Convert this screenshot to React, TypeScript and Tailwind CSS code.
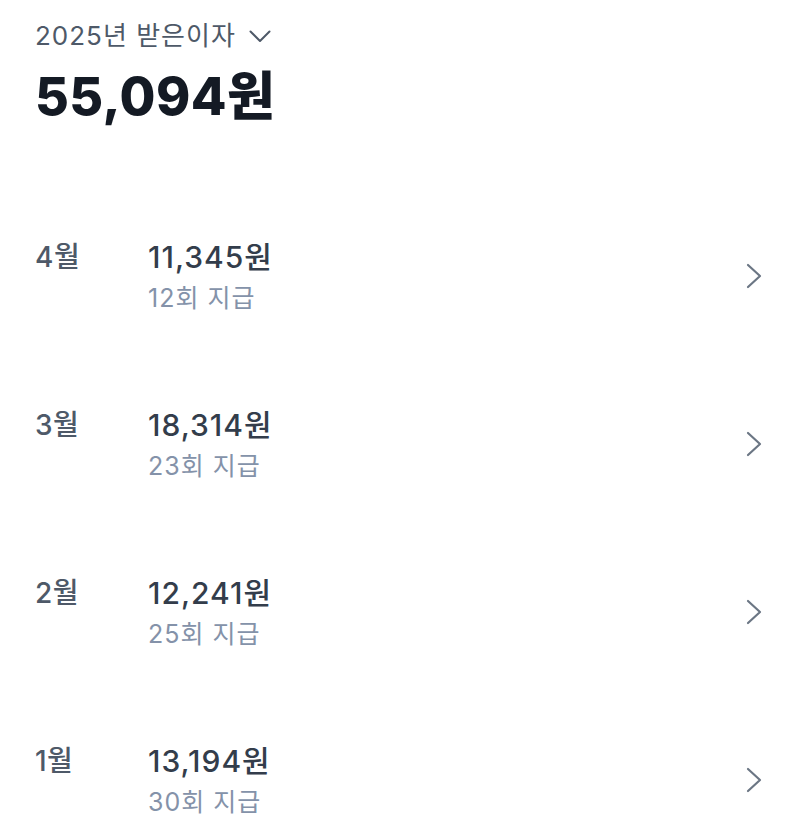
import React from "react";

type Row = { month: string; amount: string; count: string };

const rows: Row[] = [
  { month: "4월", amount: "11,345원", count: "12회 지급" },
  { month: "3월", amount: "18,314원", count: "23회 지급" },
  { month: "2월", amount: "12,241원", count: "25회 지급" },
  { month: "1월", amount: "13,194원", count: "30회 지급" },
];

const font = {
  fontFamily: '"Inter", "Noto Sans CJK KR", "Noto Sans", sans-serif',
};

function ChevronDown() {
  return (
    <svg width="22" height="13" viewBox="0 0 22 13" fill="none">
      <path d="M1.5 1.5 L11 11 L20.5 1.5" stroke="#4e5968" strokeWidth="2" strokeLinecap="round" strokeLinejoin="round" />
    </svg>
  );
}

function ChevronRight() {
  return (
    <svg width="16" height="26" viewBox="0 0 16 26" fill="none">
      <path d="M2 2 L14 13 L2 24" stroke="#6b7684" strokeWidth="2.2" strokeLinecap="round" strokeLinejoin="round" />
    </svg>
  );
}

export default function App() {
  return (
    <div className="min-h-screen w-full bg-white" style={font}>
      <div className="pl-[35px] pr-[34px] pt-[19px]">
        <div className="flex items-center gap-[13px]">
          <span className="text-[26px] leading-[34px] text-[#4e5968] tracking-[1px]">2025년 받은이자</span>
          <ChevronDown />
        </div>
        <div className="mt-[12px] text-[52px] leading-[64px] font-extrabold text-[#141a24] tracking-[0.4px]">55,094원</div>
        <div className="mt-[63px] flex flex-col">
          {rows.map((r) => (
            <div key={r.month} className="flex h-[168px] items-center justify-between">
              <div className="flex items-start">
                <div className="w-[113px] text-[28px] leading-[36px] font-medium text-[#4e5968] tracking-[0.5px]">{r.month}</div>
                <div className="flex flex-col gap-[7px]">
                  <div className="text-[30px] leading-[36px] font-medium text-[#333d4b] tracking-[1px]">{r.amount}</div>
                  <div className="text-[25px] leading-[32px] text-[#8492a9] tracking-[1px]">{r.count}</div>
                </div>
              </div>
              <ChevronRight />
            </div>
          ))}
        </div>
      </div>
    </div>
  );
}
